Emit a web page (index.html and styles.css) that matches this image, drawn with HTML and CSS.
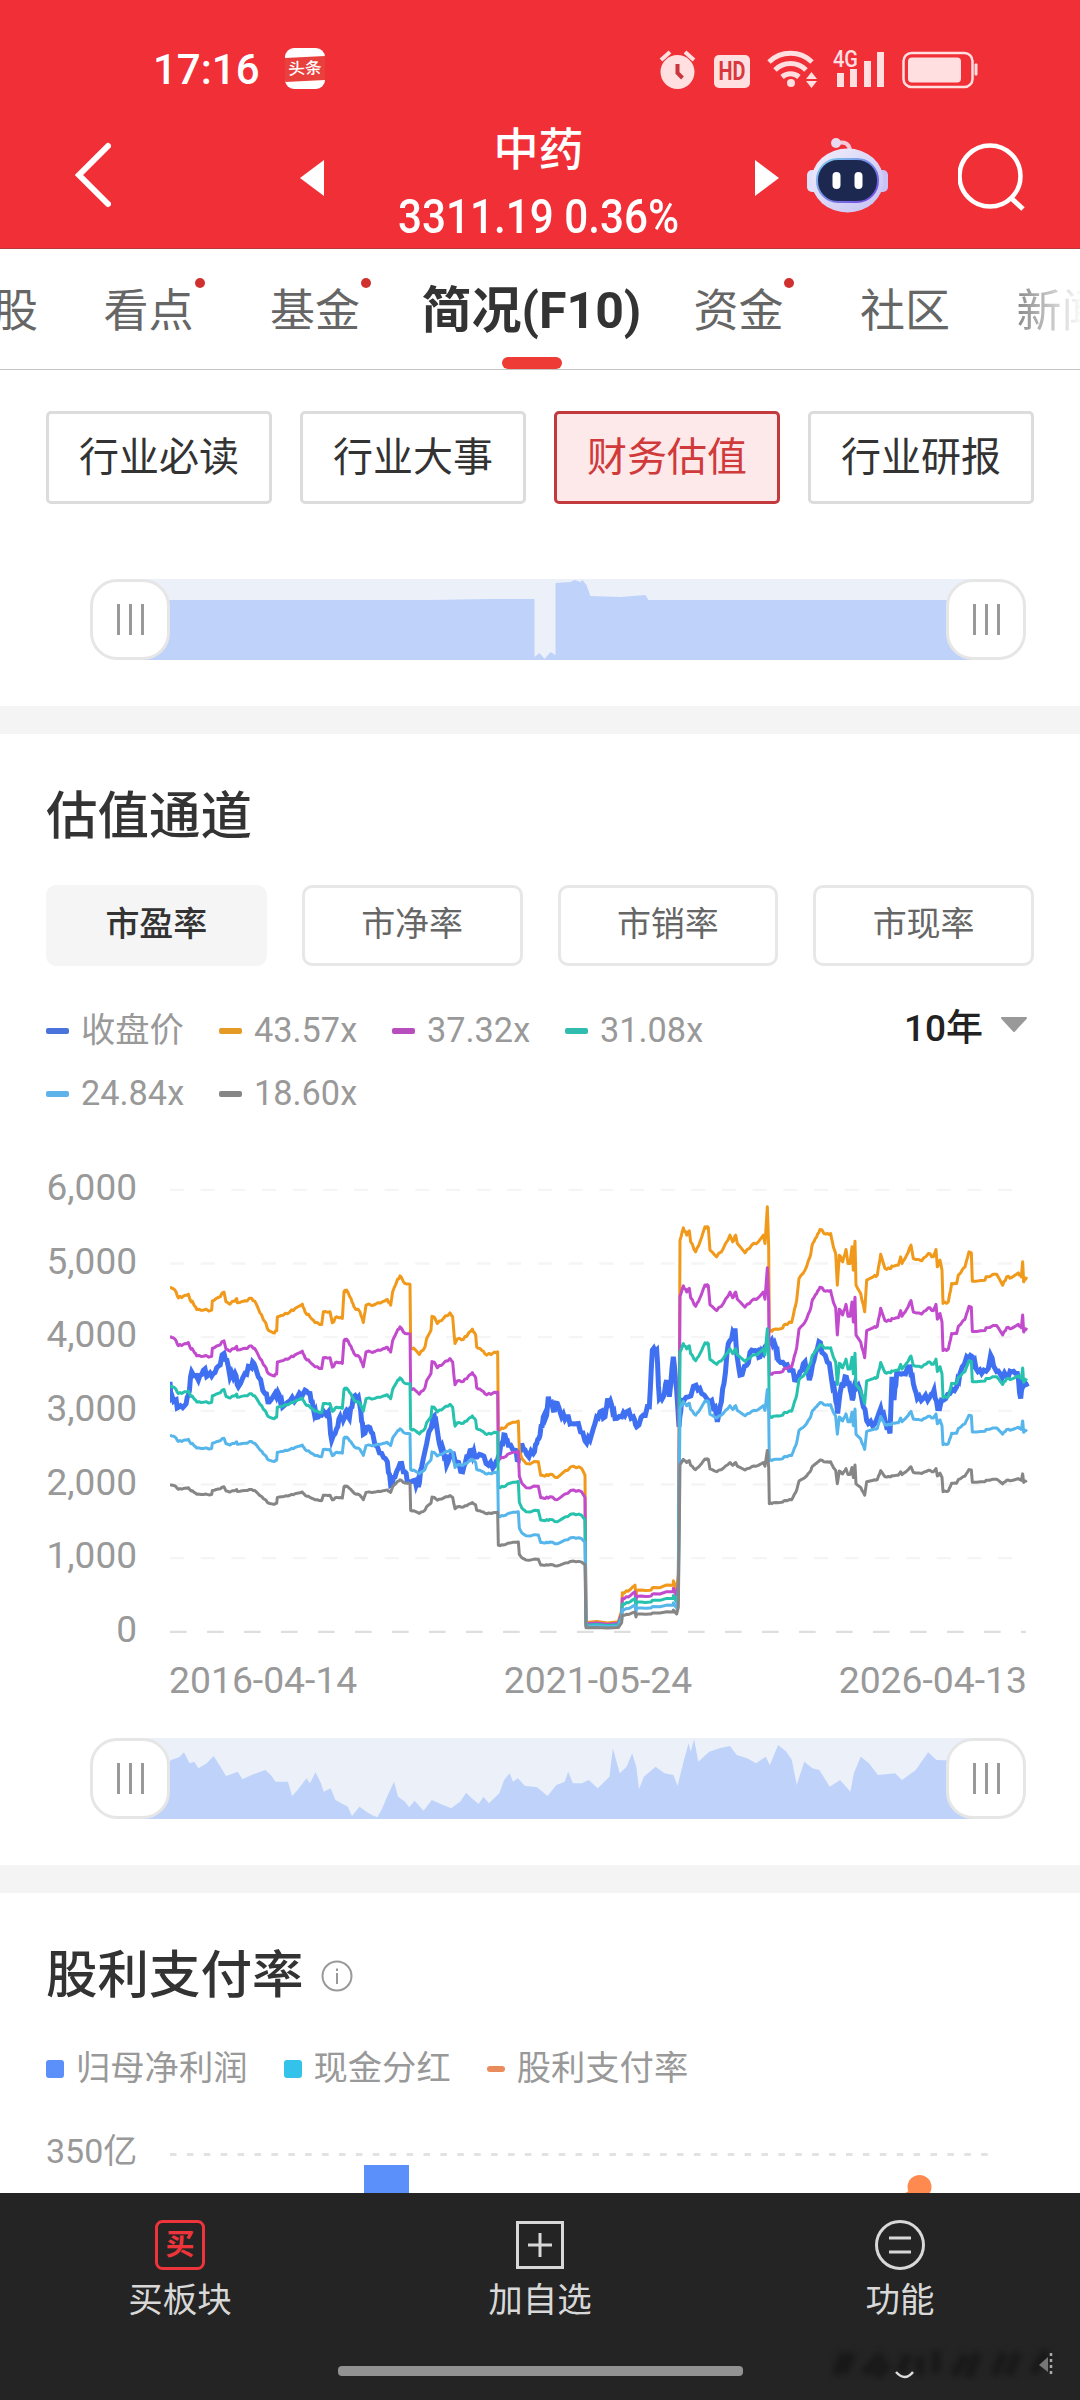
FILE: index.html
```html
<!DOCTYPE html>
<html lang="zh-CN">
  <head>
    <meta charset="UTF-8" />
    <meta name="viewport" content="width=device-width, initial-scale=1" />
    <title>中药 - 简况(F10)</title>
    <link rel="stylesheet" href="styles.css">
  </head>
  <body>
    <header class="header">
      <div class="status-bar">
        <span class="time">17:16</span>
        <span class="app-icon"><span>头条</span></span>
        <svg class="status-icons" width="320" height="44" viewBox="0 0 320 44">
          <g fill="#ffdfe0">
            <circle cx="18.500" cy="26" r="17" />
            <path d="M2 14L11 6M26 6L35 14" stroke="#ffdfe0" stroke-width="4" />
            <path d="M18.500 18v9l5 5" fill="none" stroke="#c9373c" stroke-width="4" />
            <rect x="55" y="9" width="36" height="33" rx="5" />
            <text class="hd" x="73" y="34" text-anchor="middle" textLength="27" lengthAdjust="spacingAndGlyphs">HD</text>
            <g fill="none" stroke="#ffdfe0" stroke-width="5">
              <path d="M110 16a31 31 0 0 1 43 0" />
              <path d="M116 24a22 22 0 0 1 31 0" />
              <path d="M123 31a13 13 0 0 1 17 0" />
            </g>
            <circle cx="132" cy="37" r="4" />
            <path d="M147 33l5.500-7 5.500 7zM147 35h11l-5.500 7z" />
            <text class="net" x="174" y="21" textLength="25" lengthAdjust="spacingAndGlyphs">4G</text>
            <path d="M178 27h7v14h-7zM191 23h7v18h-7zM205 15h7v26h-7zM218 6h7v35h-7z" />
            <rect x="244.500" y="7" width="69" height="34" rx="8" fill="none" stroke="#ffdfe0" stroke-width="2.500" />
            <rect x="249" y="11.500" width="53" height="25" rx="4" />
            <rect x="315.500" y="17.500" width="3" height="12" rx="1" />
          </g>
        </svg>
      </div>
      <div class="nav">
        <svg class="back" width="36" height="66" viewBox="0 0 36 66">
          <path d="M33 4L4 33L33 62" fill="none" stroke="#fff" stroke-width="6" stroke-linecap="round" />
        </svg>
        <svg class="prev" width="24" height="36" viewBox="0 0 24 36"><path d="M24 0v36L0 18z" fill="#fff" /></svg>
        <div class="stock">
          <h1>中药</h1>
          <p>3311.19 0.36%</p>
        </div>
        <svg class="next" width="24" height="36" viewBox="0 0 24 36"><path d="M0 0v36L24 18z" fill="#fff" /></svg>
        <svg class="robot" width="82" height="76" viewBox="0 0 82 76">
          <defs>
            <linearGradient id="shell" x1="0" y1="0" x2="1" y2="1">
              <stop offset="0" stop-color="#f3effb" />
              <stop offset="1" stop-color="#c3c0f3" />
            </linearGradient>
            <linearGradient id="rim" x1="0" y1="0" x2="1" y2="1">
              <stop offset="0" stop-color="#7fd0ef" />
              <stop offset="1" stop-color="#7040e0" />
            </linearGradient>
          </defs>
          <path d="M30 6c8-2 12 1 13 7" fill="none" stroke="#f5c9da" stroke-width="4" />
          <circle cx="29" cy="6" r="5" fill="#ead9ee" />
          <rect x="0" y="33" width="12" height="22" rx="5" fill="#dfe1fa" />
          <rect x="69" y="33" width="12" height="22" rx="5" fill="#c9c2f8" />
          <ellipse cx="40.500" cy="43.500" rx="36" ry="32" fill="url(#shell)" />
          <rect x="10" y="22" width="61" height="43" rx="21" fill="#1d2850" stroke="url(#rim)" stroke-width="2" />
          <rect x="25.500" y="35" width="8" height="17" rx="4" fill="#fff" />
          <rect x="47.500" y="35" width="8" height="17" rx="4" fill="#fff" />
        </svg>
        <svg class="search" width="68" height="68" viewBox="0 0 68 68">
          <circle cx="32" cy="33" r="30.500" fill="none" stroke="#fff" stroke-width="4.500" />
          <path d="M53 55L65 66" stroke="#fff" stroke-width="5" />
        </svg>
      </div>
    </header>

    <nav class="tabs">
      <a class="tab first">个股</a>
      <a class="tab has-dot">看点</a>
      <a class="tab has-dot">基金</a>
      <a class="tab active">简况(F10)</a>
      <a class="tab has-dot">资金</a>
      <a class="tab">社区</a>
      <a class="tab last">新闻</a>
    </nav>

    <main>
      <section class="panel panel-top">
        <div class="sub-tabs">
          <button>行业必读</button>
          <button>行业大事</button>
          <button class="active">财务估值</button>
          <button>行业研报</button>
        </div>
        <div class="slider">
          <svg class="track" viewBox="0 0 856 81" preserveAspectRatio="none">
            <path d="M0 21H300L360 20H404V78L409 74L414 80L420 73L425 76V4L440 3L444 1L450 3L452 1L456 6L460 17L490 18L515 16L518 21H856V81H0Z" />
          </svg>
          <span class="handle"><i></i><i></i><i></i></span>
          <span class="handle"><i></i><i></i><i></i></span>
        </div>
      </section>

      <section class="panel panel-channel">
        <h2>估值通道</h2>
        <div class="ratio-tabs">
          <button class="active">市盈率</button>
          <button>市净率</button>
          <button>市销率</button>
          <button>市现率</button>
        </div>
        <div class="legend-row">
          <ul class="legend">
            <li class="c-price">收盘价</li>
            <li class="c-orange">43.57x</li>
            <li class="c-purple">37.32x</li>
            <li class="c-teal">31.08x</li>
            <li class="c-sky">24.84x</li>
            <li class="c-gray">18.60x</li>
          </ul>
          <div class="range">10年
            <svg width="28" height="16" viewBox="0 0 28 16"><path d="M2 1h24L14 14z" fill="#999" stroke="#999" stroke-width="2" stroke-linejoin="round" /></svg>
          </div>
        </div>
        <div class="chart">
          <ul class="y-axis">
            <li>6,000</li>
            <li>5,000</li>
            <li>4,000</li>
            <li>3,000</li>
            <li>2,000</li>
            <li>1,000</li>
            <li>0</li>
          </ul>
          <svg id="plot" class="plot" viewBox="60 0 2580 1460"></svg>
        </div>
        <div class="x-axis"><span>2016-04-14</span><span>2021-05-24</span><span>2026-04-13</span></div>
        <div class="slider">
          <svg class="track" viewBox="190 354 1242 243" preserveAspectRatio="none">
            <path d="M190 440L240 440L248 420L260 412L267 397L275 430L282 425L288 445L300 430L310 408L320 440L328 468L345 455L352 478L365 465L385 450L393 465L400 485L418 485L424 528L432 510L445 475L450 490L458 457L466 490L470 515L480 505L487 540L505 560L511 588L522 560L532 575L540 585L548 592L555 565L562 530L572 485L578 530L588 545L594 562L602 542L615 572L627 540L640 552L655 565L668 545L677 518L685 535L695 552L702 530L710 550L725 520L732 480L740 460L745 485L752 475L762 497L780 502L795 528L808 495L820 485L825 455L832 490L845 490L855 480L868 505L885 470L890 385L900 460L910 440L918 400L924 440L928 508L935 470L952 440L965 460L978 465L984 498L992 430L1000 370L1003 395L1008 358L1014 425L1030 395L1045 385L1060 378L1070 405L1085 415L1098 430L1112 410L1118 435L1130 375L1142 395L1150 420L1157 495L1168 425L1180 445L1190 450L1205 500L1220 480L1235 515L1240 460L1250 410L1262 430L1275 465L1300 460L1310 480L1330 450L1340 420L1348 397L1360 420L1432 425V597H190Z" />
          </svg>
          <span class="handle"><i></i><i></i><i></i></span>
          <span class="handle"><i></i><i></i><i></i></span>
        </div>
      </section>

      <section class="panel panel-dividend">
        <h2>股利支付率
          <svg width="32" height="32" viewBox="0 0 32 32" fill="none" stroke="#999" stroke-width="2">
            <circle cx="16" cy="16" r="14.500" />
            <path d="M16 13v11M16 8.500v2.500" />
          </svg>
        </h2>
        <ul class="legend legend-bars">
          <li class="c-profit">归母净利润</li>
          <li class="c-cash">现金分红</li>
          <li class="c-payout">股利支付率</li>
        </ul>
        <div class="dividend-chart">
          <span>350亿</span>
          <svg width="856" height="60" viewBox="0 0 856 60">
            <path d="M0 21.500H820" stroke="#e2e2e2" stroke-width="3" stroke-dasharray="6.500 10.400" />
            <rect x="194" y="32" width="45" height="28" fill="#5b8ff9" />
            <path d="M749 54L736 62" stroke="#ff8a50" stroke-width="4" />
            <circle cx="749.500" cy="54" r="12" fill="#ff8a50" />
          </svg>
        </div>
      </section>
    </main>

    <footer class="bottom-bar">
      <div class="actions">
        <a>
          <svg width="50" height="50" viewBox="0 0 50 50">
            <rect x="1.500" y="1.500" width="47" height="47" rx="6" fill="none" stroke="#ee343b" stroke-width="3" />
            <text class="buy" x="25" y="35" text-anchor="middle">买</text>
          </svg>
          买板块
        </a>
        <a>
          <svg width="50" height="50" viewBox="0 0 50 50" fill="none" stroke="#d8d8d8" stroke-width="3">
            <path d="M2.500 2.500h45v45h-45zM25 13v24M13 25h24" />
          </svg>
          加自选
        </a>
        <a>
          <svg width="50" height="50" viewBox="0 0 50 50" fill="none" stroke="#d8d8d8" stroke-width="3">
            <circle cx="25" cy="25" r="23.500" />
            <path d="M14 18h22M14 32h22" />
          </svg>
          功能
        </a>
      </div>
      <span class="home-indicator"></span>
      <svg class="smudge" width="230" height="36" viewBox="0 0 230 36">
        <path class="smudge-dark" d="M8 30L16 8M24 8l-8 20M36 28l18-18M48 32l12-14M80 10l-8 18M92 12v18M108 6v22M126 30l12-20M150 8l-10 24M166 30l10-22M190 8l-10 22M205 28l14-22" />
        <path d="M68 27q9 10 17 0" fill="none" stroke="#ddd" stroke-width="2.500" />
        <path d="M223 8v24" stroke="#aaa" stroke-width="2.500" stroke-dasharray="3 3" />
        <path d="M220 12l-9 8 9 7z" fill="#777" />
      </svg>
    </footer>

    <script src="chart.js"></script>
  </body>
</html>
```

FILE: styles.css
```css
* {
  box-sizing: border-box;
  margin: 0;
  padding: 0;
}
body {
  width: 1080px;
  height: 2400px;
  overflow: hidden;
  display: flex;
  flex-direction: column;
  font-family: Roboto, "Noto Sans CJK SC", sans-serif;
  background: #fff;
  color: #333;
}
ul {
  list-style: none;
}
svg {
  display: block;
  flex-shrink: 0;
}
button {
  font-family: inherit;
  background: #fff;
}

/* header */
.header {
  height: 249px;
  flex-shrink: 0;
  background: #f12f37;
  color: #fff;
  border-bottom: 1px solid #b8383c;
}
.status-bar {
  height: 112px;
  padding: 46px 101px 0 153px;
  display: flex;
  align-items: flex-start;
}
.time {
  font-size: 42px;
  line-height: 47px;
  font-weight: 500;
}
.app-icon {
  width: 40px;
  height: 41px;
  margin: 2px 0 0 25px;
  border-radius: 9px;
  overflow: hidden;
  background: #fff;
  display: flex;
  align-items: center;
}
.app-icon span {
  width: 40px;
  flex-shrink: 0;
  background: #e8403c;
  font-size: 16px;
  line-height: 24px;
  font-weight: 500;
  text-align: center;
  transform: rotate(-3deg) scaleX(1.05);
}
.status-icons {
  margin-left: auto;
}
.hd {
  font-size: 25px;
  font-weight: 700;
  fill: #d9383e;
}
.net {
  font-size: 24px;
  font-weight: 500;
}
.nav {
  display: flex;
  align-items: flex-start;
  padding: 0 54px 0 75px;
  height: 136px;
}
.back {
  margin-top: 30px;
}
.prev {
  margin: 48px 0 0 189px;
}
.stock {
  width: 431px;
  text-align: center;
}
.stock h1 {
  font-size: 45px;
  font-weight: 500;
  line-height: 60px;
  margin: 9px 2px 0 0;
}
.stock p {
  font-size: 48px;
  font-weight: 500;
  line-height: 64px;
  margin: 4px 2px 0 0;
  transform: scaleX(0.88);
}
.next {
  margin-top: 48px;
}
.robot {
  margin: 25px 0 0 28px;
}
.search {
  margin: 31px 0 0 auto;
}

/* tabs */
.tabs {
  display: flex;
  align-items: center;
  flex-shrink: 0;
  height: 121px;
  padding-left: 14px;
  margin-left: -66px;
  border-bottom: 1px solid #c4c4c4;
  overflow: hidden;
}
.tab {
  position: relative;
  flex-shrink: 0;
  height: 120px;
  margin-right: 76.500px;
  font-size: 45px;
  line-height: 125px;
  color: #666;
}
.tab.first {
  margin-right: 65.500px;
}
.tab.active {
  margin: 0 52px 0 -15px;
  font-size: 50px;
  font-weight: 700;
  color: #333;
}
.tab.active::after {
  content: "";
  position: absolute;
  left: 50%;
  bottom: 0;
  width: 60px;
  height: 12px;
  margin-left: -29px;
  border-radius: 6px;
  background: #ee3b36;
}
.tab.has-dot::after {
  content: "";
  position: absolute;
  right: -11px;
  top: 29px;
  width: 10px;
  height: 10px;
  border-radius: 50%;
  background: #d0312f;
}
.tab.last {
  margin: 0 0 0 -10px;
  color: transparent;
  background: linear-gradient(90deg, #888, #fff 75%);
  background-clip: text;
  -webkit-background-clip: text;
}

/* panels */
.panel {
  padding: 0 46px;
}
.panel-top {
  height: 336px;
  padding-top: 41px;
}
.panel-channel {
  height: 1159px;
  border-top: 28px solid #f4f4f4;
  padding-top: 50px;
}
.panel-dividend {
  height: 328px;
  border-top: 28px solid #f4f4f4;
  padding-top: 50px;
}
.sub-tabs {
  display: flex;
  gap: 28px;
}
.sub-tabs button {
  flex: 1;
  height: 93px;
  padding-bottom: 8px;
  border: 3px solid #dcdcdc;
  border-radius: 5px;
  font-size: 40px;
  color: #333;
}
.sub-tabs .active {
  background: #fde9ea;
  border-color: #c23a3e;
  color: #d03a3b;
}
h2 {
  display: flex;
  align-items: center;
  gap: 17px;
  font-size: 51.500px;
  font-weight: 500;
  line-height: 66px;
  color: #333;
}

/* range slider */
.slider {
  position: relative;
  display: flex;
  justify-content: space-between;
  height: 81px;
  margin: 75px 8px 0 44px;
}
.track {
  position: absolute;
  left: 41px;
  top: 0;
  width: 855px;
  height: 81px;
  background: #ebf0f9;
}
.track path {
  fill: #bfd3fa;
}
.handle {
  position: relative;
  display: flex;
  align-items: center;
  justify-content: center;
  gap: 9px;
  width: 80px;
  height: 81px;
  border: 3px solid #e6e6e6;
  border-radius: 27px;
  background: #fff;
}
.handle i {
  width: 3px;
  height: 31px;
  background: #999;
}

.ratio-tabs {
  display: flex;
  gap: 35px;
  margin-top: 35px;
}
.ratio-tabs button {
  flex: 1;
  height: 81px;
  padding-bottom: 8px;
  border: 3px solid #e7e7e7;
  border-radius: 10px;
  font-size: 34px;
  color: #666;
}
.ratio-tabs .active {
  background: #f5f5f5;
  border-color: #f5f5f5;
  color: #333;
  font-weight: 500;
}

/* legends */
.legend-row {
  display: flex;
  justify-content: space-between;
  align-items: flex-start;
  margin-top: 33px;
}
.legend {
  display: flex;
  flex-wrap: wrap;
  width: 760px;
}
.legend li {
  display: flex;
  align-items: center;
  gap: 12px;
  width: 173px;
  font-size: 34.300px;
  line-height: 63px;
  color: #999;
  white-space: nowrap;
}
.legend li::before {
  content: "";
  width: 23px;
  height: 6px;
  margin-top: 1px;
  border-radius: 2px;
  background: currentColor;
}
.legend .c-price::before { background: #4a74db; }
.legend .c-orange::before { background: #e59a26; }
.legend .c-purple::before { background: #b84dbd; }
.legend .c-teal::before { background: #30bdb0; }
.legend .c-sky::before { background: #5db3ea; }
.legend .c-gray::before { background: #868686; }
.range {
  display: flex;
  align-items: center;
  gap: 17px;
  margin-right: 6px;
  font-size: 37px;
  font-weight: 500;
  line-height: 60px;
  color: #222;
}
.range svg {
  margin-top: -8px;
}

/* valuation chart */
.chart {
  display: flex;
  justify-content: space-between;
  height: 487px;
  margin: 35px -6px 0 0;
}
.y-axis {
  width: 91px;
  text-align: right;
  margin-top: -9px;
}
.y-axis li {
  height: 73.700px;
  font-size: 37px;
  line-height: 73px;
  color: #999;
}
.plot {
  width: 860px;
  height: 487px;
  margin-right: 10px;
}
.plot polyline {
  fill: none;
  stroke-width: 9;
  stroke-linejoin: round;
}
.plot .price {
  stroke-width: 15;
  stroke-linejoin: miter;
}
.grid {
  stroke: #f5f5f5;
  stroke-width: 7;
  stroke-dasharray: 42 50;
}
.grid.zero {
  stroke: #dedede;
  stroke-dasharray: 50 61;
}
.x-axis {
  display: flex;
  justify-content: space-between;
  margin: 10px 7px 0 123px;
  font-size: 37.300px;
  line-height: 47px;
  color: #999;
}
.panel-channel .slider {
  margin-top: 34px;
}

/* dividend */
.legend-bars {
  width: auto;
  gap: 36px;
  margin-top: 28px;
}
.legend-bars li {
  width: auto;
}
.legend-bars li::before {
  width: 18px;
  height: 18px;
  border-radius: 3px;
}
.legend .c-profit::before { background: #5b8ff9; }
.legend .c-cash::before { background: #33c2e9; }
.legend .c-payout::before {
  height: 6px;
  background: #ea8b5c;
}
.dividend-chart {
  display: flex;
  justify-content: space-between;
  margin: 33px 8px 0 0;
  font-size: 34px;
  line-height: 36px;
  color: #999;
}

/* bottom bar */
.bottom-bar {
  position: relative;
  flex: 1;
  background: #242424;
}
.actions {
  display: flex;
  padding-top: 27px;
}
.actions a {
  flex: 1;
  display: flex;
  flex-direction: column;
  align-items: center;
  gap: 9px;
  font-size: 34.500px;
  line-height: 42px;
  color: #d8d8d8;
}
.buy {
  font-size: 29px;
  font-weight: 700;
  fill: #ee343b;
}
.home-indicator {
  display: block;
  width: 405px;
  height: 10px;
  margin: 45px auto 0;
  border-radius: 4px;
  background: #929292;
}
.smudge {
  position: absolute;
  right: 22px;
  bottom: 19px;
}
.smudge-dark {
  fill: none;
  stroke: #181818;
  stroke-width: 9;
  filter: blur(3px);
}
```

FILE: chart.js
```js
// Three chart units per css pixel, value 0 sits at y = 1415, 1000 = 221 units
const ZERO = 1415;
const STEP = 221;
const NS = 'http://www.w3.org/2000/svg';
const plot = document.getElementById('plot');

// top band (43.57x), the other bands are the same curve at a lower multiple
const band = `60,380 75,390 85,413 100,408 115,402 120,418 130,430 140,448 160,450 185,450 187,422 205,412 222,396 228,425 240,432
260,415 262,428 285,422 305,414 318,430 330,458 345,485 355,510 370,518 380,512 382,470 400,465 420,455 435,445 457,432 465,455
480,470 495,487 515,493 520,455 540,455 547,488 560,470 577,475 582,395 590,390 603,415 612,440 630,455 640,487 648,435 675,433
700,423 712,418 722,435 728,395 740,365 750,347 765,370 780,372 782,562 795,568 808,583 825,560 830,535 843,510 846,468 855,475
862,490 880,475 900,458 908,470 912,520 915,550 922,536 940,538 955,520 967,507 977,525 980,560 995,570 1010,585 1030,578
1043,575 1045,807 1060,805 1080,790 1105,783 1108,870 1115,893 1128,910 1165,905 1172,945 1185,948 1200,942 1222,952 1245,932
1270,918 1295,925 1305,945 1308,1387 1405,1385 1415,1350 1417,1298 1435,1293 1455,1275 1458,1310 1460,1290 1500,1290 1510,1282
1570,1275 1570,1262 1580,1290 1585,1242 1590,240 1600,203 1610,225 1618,212 1622,245 1637,275 1650,245 1665,200 1675,203 1680,270
1700,290 1720,265 1740,225 1748,245 1757,225 1762,250 1785,278 1805,255 1825,245 1840,225 1845,250 1852,140 1856,260 1858,515
1870,508 1895,505 1905,492 1925,487 1930,465 1940,420 1947,355 1965,330 1980,290 1988,250 2000,230 2010,208 2028,222 2042,220
2050,260 2057,280 2062,375 2068,285 2078,305 2088,268 2094,310 2100,310 2106,260 2110,330 2115,243 2118,375 2132,400 2144,455
2150,360 2170,350 2182,345 2192,282 2205,325 2220,325 2228,318 2245,315 2252,290 2256,310 2270,285 2283,255 2290,295 2315,302
2335,280 2350,290 2358,268 2362,320 2370,300 2376,330 2379,430 2395,425 2405,370 2420,370 2425,345 2445,320 2457,275 2464,278
2467,363 2505,360 2508,350 2540,342 2558,375 2570,350 2585,352 2605,338 2614,350 2618,305 2621,365 2630,350`;

const price = `60,665 63,715 75,720 85,742 105,735 115,705 125,635 145,660 160,630 175,645 190,640 205,618 222,580 235,620
240,650 255,640 265,680 285,640 300,620 312,610 325,650 345,700 358,725 375,700 388,705 398,740 420,722 440,715 465,690 480,700
490,745 500,772 515,765 535,755 545,840 560,805 570,770 580,780 590,750 598,775 610,710 625,710 632,750 640,822 655,800 668,820
675,855 695,880 712,905 722,975 735,950 750,910 765,935 775,965 795,960 805,980 815,920 830,850 850,770 858,785 868,850 880,870
890,915 905,880 920,905 938,935 950,890 965,870 975,890 995,885 1015,915 1035,915 1045,890 1055,850 1065,825 1075,855 1095,870
1105,900 1115,850 1130,882 1150,880 1160,850 1170,825 1180,770 1190,765 1195,710 1210,750 1222,730 1235,770 1250,770 1265,790
1285,790 1305,842 1320,840 1335,790 1350,755 1365,770 1373,715 1385,735 1395,775 1415,770 1430,755 1450,770 1460,800 1480,765
1498,740 1507,570 1520,570 1528,715 1540,710 1550,660 1558,710 1570,590 1580,690 1587,800 1595,720 1615,710 1638,675 1655,700
1680,725 1695,740 1702,785 1710,740 1722,670 1735,550 1745,535 1755,505 1760,580 1770,645 1790,615 1805,570 1820,575 1830,590
1845,560 1865,540 1877,560 1885,600 1905,615 1925,630 1938,660 1950,635 1965,605 1978,660 1992,600 2007,545 2020,580 2038,610
2045,660 2055,700 2063,760 2070,700 2085,650 2098,670 2107,720 2115,670 2130,690 2140,740 2155,790 2175,790 2192,745 2205,780
2220,820 2226,650 2232,720 2240,640 2260,640 2280,620 2290,670 2302,715 2320,715 2340,710 2352,690 2363,745 2380,720 2400,700
2420,680 2430,640 2450,590 2467,590 2478,625 2495,640 2515,625 2522,585 2535,625 2550,640 2570,650 2585,635 2602,640 2612,715
2620,655 2632,680`;

const bands = [
  [43.57, '#f0991a'],
  [37.32, '#c24acd'],
  [31.08, '#27c2ae'],
  [24.84, '#56b6ec'],
  [18.60, '#868686'],
];

function add(tag, attrs) {
  const el = document.createElementNS(NS, tag);
  for (const key in attrs) el.setAttribute(key, attrs[key]);
  plot.appendChild(el);
}

function parse(text) {
  return text.split(/\s+/).map((p) => p.split(',').map(Number));
}

// daily noise between the sampled points
function roughen(points, size) {
  const out = [];
  points.forEach(([x, y], i) => {
    out.push([x, y]);
    const next = points[i + 1];
    if (!next || next[0] - x < 8) return;
    for (let k = 1; k < 3; k++) {
      const t = k / 3;
      const noise = Math.sin(i * 7.3 + k * 2.9) * size;
      out.push([x + (next[0] - x) * t, y + (next[1] - y) * t + noise]);
    }
  });
  return out;
}

for (let i = 0; i <= 6; i++) {
  const y = ZERO - i * STEP;
  add('line', { class: i ? 'grid' : 'grid zero', x1: 60, x2: 2628, y1: y, y2: y });
}

add('polyline', { class: 'price', points: roughen(parse(price), 9).join(' '), stroke: '#4070f2' });

const base = roughen(parse(band), 3);
bands.forEach(([multiple, color]) => {
  const points = base
    .map(([x, y]) => x.toFixed(1) + ',' + (ZERO - (ZERO - y) * multiple / 43.57).toFixed(1))
    .join(' ');
  add('polyline', { points, stroke: color });
});
```
